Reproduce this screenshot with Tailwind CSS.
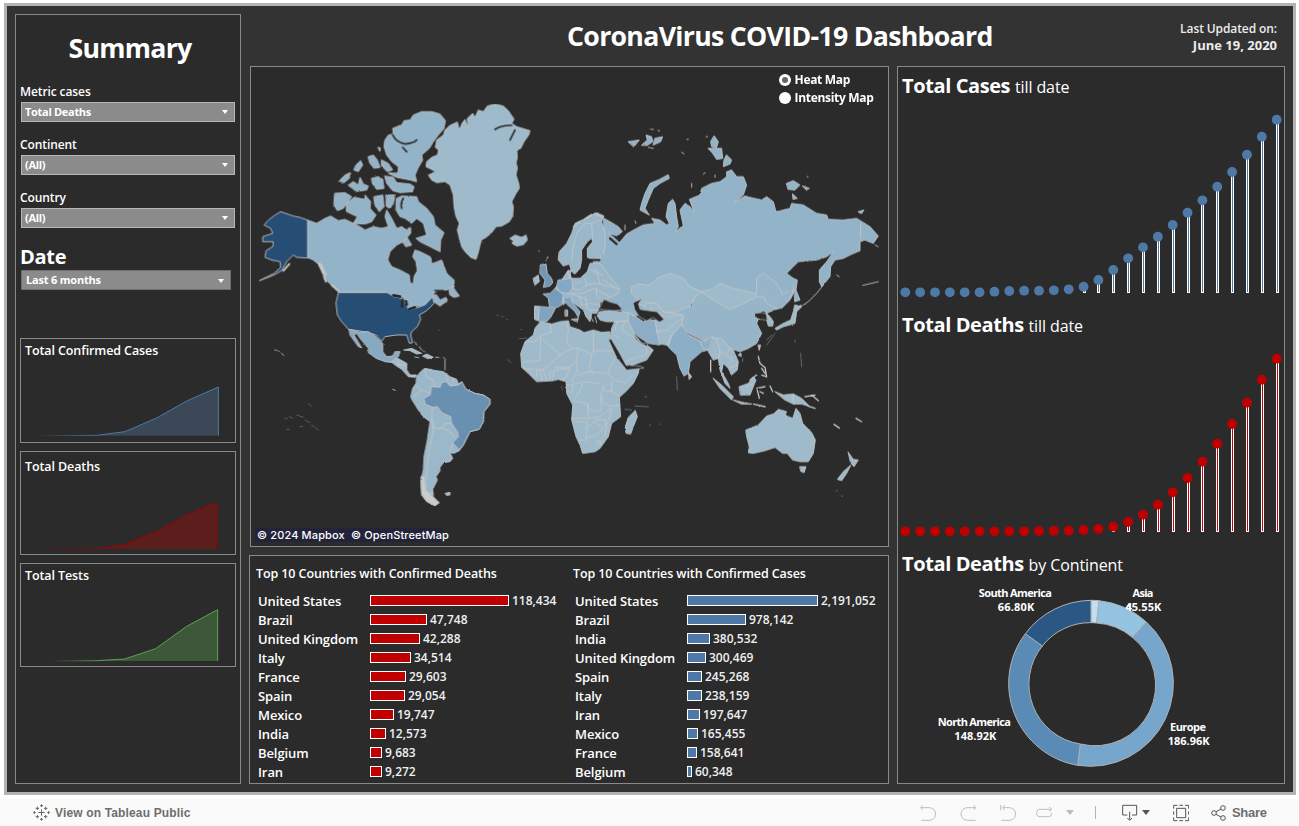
<!DOCTYPE html>
<html lang="en">
<head>
<meta charset="utf-8">
<title>CoronaVirus COVID-19 Dashboard</title>
<script src="https://cdn.jsdelivr.net/npm/@tailwindcss/browser@4"></script>
</head>
<body class="h-[826px] w-[1299px] overflow-hidden bg-white font-['Open_Sans','Noto_Sans',sans-serif] font-semibold text-white">
<div class="flex h-[826px] flex-col">
  <main class="mt-[3px] ml-1 flex h-[792px] w-[1292px] shrink-0 border-[3px] border-[#b3b3b3] bg-[#333333] pt-2 pl-2">

    <aside class="flex h-[770px] w-[226px] flex-col border border-[#8a8a8a] bg-[#2b2b2b] pl-1">
      <h1 class="flex h-[67px] w-[216px] items-center justify-center pl-1 text-[26.7px] font-bold tracking-[-0.7px]">Summary</h1>
      <label class="h-5 text-[12px] leading-5 tracking-[-0.1px]">Metric cases</label>
      <div class="ml-px flex h-5 w-[214px] items-center justify-between border border-[#b8b8b8] bg-[#8b8b8b] pr-1.5 pl-[3px] text-[11px] font-bold tracking-[-0.3px]"><span>Total Deaths</span><svg class="h-1 w-1.5" viewBox="0 0 6 4"><path d="M0 0h6L3 4z" fill="#fff"/></svg></div>
      <label class="mt-[13px] h-5 text-[12px] leading-5 tracking-[-0.1px]">Continent</label>
      <div class="ml-px flex h-5 w-[214px] items-center justify-between border border-[#b8b8b8] bg-[#8b8b8b] pr-1.5 pl-[3px] text-[11px] font-bold tracking-[-0.3px]"><span>(All)</span><svg class="h-1 w-1.5" viewBox="0 0 6 4"><path d="M0 0h6L3 4z" fill="#fff"/></svg></div>
      <label class="mt-[13px] h-5 text-[12px] leading-5 tracking-[-0.1px]">Country</label>
      <div class="ml-px flex h-5 w-[214px] items-center justify-between border border-[#b8b8b8] bg-[#8b8b8b] pr-1.5 pl-[3px] text-[11px] font-bold tracking-[-0.3px]"><span>(All)</span><svg class="h-1 w-1.5" viewBox="0 0 6 4"><path d="M0 0h6L3 4z" fill="#fff"/></svg></div>
      <h2 class="mt-4 h-[26px] text-[20px] leading-[26px] font-bold tracking-[-0.3px]">Date</h2>
      <div class="ml-px flex h-5 w-[210px] items-center justify-between border border-[#6e6e6e] bg-[#8b8b8b] pt-px pr-1.5 pl-1 text-[11px] font-bold tracking-[-0.2px]"><span>Last 6 months</span><svg class="h-1 w-1.5" viewBox="0 0 6 4"><path d="M0 0h6L3 4z" fill="#fff"/></svg></div>

      <section class="mt-12 flex h-[105px] w-[216px] flex-col border border-[#8a8a8a]">
        <h3 class="h-[24px] pl-1 text-[12.5px] leading-[23px] tracking-[-0.1px]">Total Confirmed Cases</h3>
        <svg class="h-[79px] w-[214px]" viewBox="63 189 642 237">
          <defs><linearGradient id="gb" gradientUnits="userSpaceOnUse" x1="110" x2="340" y1="0" y2="0"><stop offset="0" stop-color="#4e79a7" stop-opacity="0"/><stop offset="1" stop-color="#4e79a7"/></linearGradient></defs>
          <path d="M100 407L290 406L375 395L470 354L560 303L656 260V407z" fill="#3a4857"/>
          <path d="M100 407L290 406L375 395L470 354L560 303L655 261V407" fill="none" stroke="url(#gb)" stroke-width="3"/>
        </svg>
      </section>
      <section class="mt-2 flex h-[104px] w-[216px] flex-col border border-[#8a8a8a]">
        <h3 class="h-[27px] pl-1 text-[12.5px] leading-[29px] tracking-[-0.1px]">Total Deaths</h3>
        <svg class="h-[75px] w-[214px]" viewBox="63 537 642 225">
          <defs><linearGradient id="gr" gradientUnits="userSpaceOnUse" x1="110" x2="340" y1="0" y2="0"><stop offset="0" stop-color="#9c0000" stop-opacity="0"/><stop offset="1" stop-color="#9c0000"/></linearGradient></defs>
          <path d="M110 747L290 745L372 735L468 695L560 646L651 606V747z" fill="#5c1d1d"/>
          <path d="M110 747L290 745L372 735L468 695L560 646L650 607V747" fill="none" stroke="url(#gr)" stroke-width="3"/>
        </svg>
      </section>
      <section class="mt-2 flex h-[104px] w-[216px] flex-col border border-[#8a8a8a]">
        <h3 class="h-[24px] pl-1 text-[12.5px] leading-[24px] tracking-[-0.1px]">Total Tests</h3>
        <svg class="h-[78px] w-[214px]" viewBox="63 864 642 234">
          <defs><linearGradient id="gg" gradientUnits="userSpaceOnUse" x1="150" x2="310" y1="0" y2="0"><stop offset="0" stop-color="#59a14f" stop-opacity="0"/><stop offset="1" stop-color="#59a14f"/></linearGradient></defs>
          <path d="M150 1083L290 1082L374 1077L467 1046L560 979L654 928V1083z" fill="#3d5739"/>
          <path d="M150 1083L290 1082L374 1077L467 1046L560 979L653 929V1083" fill="none" stroke="url(#gg)" stroke-width="3"/>
        </svg>
      </section>
    </aside>

    <div class="ml-2 flex flex-col">
      <header class="flex h-[52px] w-[1036px] justify-between">
        <h1 class="ml-[318px] h-[44px] text-[26.7px] leading-[44px] font-bold tracking-[-0.7px] whitespace-nowrap">CoronaVirus COVID-19 Dashboard</h1>
        <div class="mt-[7px] mr-2 text-right text-[12px] leading-[16px] text-[#ececec]">
          <p class="tracking-[-0.1px]">Last Updated on:</p>
          <p class="text-[13px] font-bold">June 19, 2020</p>
        </div>
      </header>
      <div class="flex">
        <div class="flex w-[640px] flex-col">
          <section class="relative ml-px h-[481px] w-[639px] border border-[#8a8a8a] bg-[#2b2b2b]">
            <svg class="block h-[479px] w-[637px]" viewBox="3 21 1911 1437" stroke="#c4c6c7" stroke-width="2.6" stroke-linejoin="round" stroke-linecap="round" fill="#9fbbcb">
              <defs><filter id="coast" x="0" y="0" width="100%" height="100%"><feTurbulence type="fractalNoise" baseFrequency="0.16" numOctaves="2" seed="4"/><feDisplacementMap in="SourceGraphic" scale="5" xChannelSelector="R" yChannelSelector="G"/></filter></defs>
              <g filter="url(#coast)">
              <!-- Greenland, Canada, Alaska -->
              <g>
                <path d="M585 210L600 196L622 186L628 210L636 190L645 178L655 205L652 175L668 160L675 172L685 150L700 155L712 138L735 132L760 138L775 152L792 178L785 190L800 200L820 206L840 212L836 225L822 245L812 265L800 270L802 292L798 310L802 322L798 345L806 370L808 385L798 400L785 425L790 440L788 468L778 485L755 498L738 500L725 518L708 532L694 540L690 555L684 580L678 598L662 592L645 575L635 560L628 535L622 510L628 490L618 470L612 440L610 405L600 375L585 365L560 368L545 360L535 345L558 335L528 320L530 305L545 292L562 285L566 270L556 262L560 240L580 225Z"/>
                <path d="M780 535L795 525L815 532L828 525L832 540L820 554L800 558L786 550L790 543Z"/>
                <g fill="#93b3c8">
                  <path d="M405 240L415 225L430 222L428 205L455 195L462 182L480 180L490 165L515 155L545 155L570 162L586 182L582 205L565 225L550 245L538 265L515 285L518 300L505 322L495 345L500 365L470 358L440 352L415 340L445 335L445 320L425 305L410 285L402 260Z"/>
                  <path d="M405 348L430 352L440 368L480 372L492 380L488 395L450 398L428 392L410 370Z"/>
                  <path d="M295 375L310 365L325 375L330 352L340 372L355 378L350 390L320 394ZM268 362L285 345L300 338L298 355L282 368ZM318 315L332 302L338 315L325 335L312 330ZM355 290L370 285L382 300L390 322L372 325L360 310ZM395 300L415 310L428 330L412 335L395 318ZM365 355L385 350L398 358L402 385L380 388L368 372ZM384 262L391 264L390 273Z"/>
                  <path d="M255 400L285 398L305 410L290 430L280 445L262 452L252 435ZM290 430L312 412L345 418L345 405L362 425L360 445L378 465L365 485L345 492L310 490L322 470L290 455ZM372 410L398 405L402 440L388 455L375 435ZM408 405L435 405L430 430L420 445L410 440Z"/>
                  <path d="M440 415L455 408L500 410L505 425L530 445L550 470L555 495L582 518L572 540L570 575L540 560L510 545L498 535L530 525L520 490L500 475L485 490L465 475L450 470L438 450ZM455 540L470 530L485 555L468 560Z"/>
                  <path d="M172 480L200 490L225 475L242 468L265 482L285 478L310 490L330 500L345 510L370 500L395 505L415 500L405 470L410 450L425 475L440 505L455 500L470 510L482 498L482 520L460 545L440 555L420 575L413 600L425 620L450 630L478 645L480 668L490 672L492 650L502 632L498 605L488 590L495 570L510 575L540 590L550 610L575 600L590 640L612 660L612 680L590 690L565 690L545 705L560 705L570 720L588 712L592 722L570 738L555 728L548 722L520 735L500 740L480 752L470 735L460 712L440 712L412 697L265 697L262 685L240 672L222 650L205 612L190 600L172 592Z"/>
                  <path d="M598 690L608 678L615 690L628 708L612 712L600 705Z"/>
                </g>
                <g fill="none" stroke="#2b2b2b" stroke-width="5"><path d="M428 225Q440 248 465 252Q490 250 500 240M735 208Q755 195 785 196M458 262L470 275M440 360L482 364M425 335H440M490 490L505 525M480 500L515 495M460 415Q450 430 455 445M548 590V606M555 692L580 692M780 240L795 210"/></g>
                <path fill="#284d73" d="M172 480L150 472L130 468L92 455L75 465L55 480L42 495L62 505L68 520L38 530L38 545L70 545L68 560L48 572L45 592L65 600L90 605L92 622L72 640L28 662L70 646L95 632L110 605L130 585L140 592L172 594Z"/>
                <path fill="none" stroke-width="6" d="M205 610L222 640M212 612L228 645M100 632L118 612M245 675L266 694M222 650L228 665"/>
              </g>
              <!-- Americas -->
              <g transform="translate(0 660)">
                <path fill="#284d73" d="M266 38H412L430 50L455 55L470 78L480 90L505 82L525 75L548 50L552 70L530 92L508 105L512 118L502 140L485 155L482 165L488 188L478 190L470 165L440 165L405 170L395 184L378 165L355 158L325 152L295 148L275 125L262 105L258 70Z"/>
                <path fill="none" stroke="#2b2b2b" stroke-width="8" d="M430 46L450 50M458 62L456 80M468 64L470 74M478 88L495 82"/>
                <path fill="#87a9c1" d="M298 148L325 156L355 155L375 168L392 185L398 190L398 215L410 230L428 228L435 215L450 215L445 230L440 232L430 248L405 245L378 235L355 218L355 205L330 175L320 160L312 165L335 203L325 200L300 165Z"/>
                <path d="M425 245L440 233L470 250L470 270L480 285L500 285L495 292L475 290L455 268L435 255ZM462 210L485 205L515 220L500 222L480 212ZM518 228L530 222L550 232L535 236ZM495 231L506 233M557 232H566M495 185L500 195M508 200L515 210M520 212L524 216"/>
                <path fill="none" d="M445 240V255L470 255M585 240V270M580 232L586 238M520 268H545"/>
                <path fill="#9ab8ca" d="M500 290L512 275L525 265L545 270L580 275L600 290L620 298L625 312L635 305L648 328L675 340L700 345L720 358L720 372L702 395L700 425L688 448L660 455L650 475L640 495L628 512L612 520L600 518L608 535L600 545L580 548L570 562L570 572L558 590L562 600L548 628L550 650L568 668L555 678L530 665L515 645L512 605L520 570L522 530L532 480L540 425L520 410L505 390L485 358L482 350L488 325L498 310Z"/>
                <path fill="#6b90b1" d="M545 320L570 322L575 308L588 305L600 318L625 315L636 306L648 328L675 340L700 345L720 358L720 372L702 395L700 425L688 448L660 455L650 475L640 495L628 510L608 488L625 470L622 455L605 430L602 410L575 398L562 380L548 382L525 372L522 355L540 345Z"/>
                <path fill="none" d="M525 268L528 290L550 300L555 320M590 280L592 300L600 315M610 295L608 316M498 318L515 330L540 340M515 330L500 345L490 350M548 382L545 420L552 445L575 445L582 432L603 430M578 445L600 455L612 470M608 490L600 515M545 420L550 450L540 500L532 560L526 610L530 640H550"/>
                <path fill="#c6cccf" d="M514 590L522 592L526 630L552 655L565 668L555 676L530 664L516 645Z"/>
                <path d="M586 640L600 637L600 645L590 646ZM75 210L80 211M85 213L88 215M94 220L101 226M428 328L436 331"/>
                <path fill="none" stroke="#777" stroke-width="2" d="M175 370L184 380M105 415H112M118 410L128 414M140 405L160 412M165 420L180 428M185 435L205 450M110 448H118M150 440H158M740 105L746 107M756 110H760M770 118H773M566 151H569M812 149H815M808 176L830 174M772 238L783 248M934 318L938 330"/>
              </g>
              <!-- Northern Eurasia -->
              <g transform="translate(930 0)" fill="#93b3c8">
                <path d="M132 475L150 485L175 500L187 515L170 527L145 520L165 535L178 548L185 540L200 522L230 505L250 495L285 490L275 475L300 480L320 495L328 490L318 470L325 430L338 418L345 430L350 470L355 500L345 518L358 505L370 498L360 450L375 430L390 440L402 455L388 418L420 405L425 385L455 370L480 365L500 350L500 335L515 330L530 350L550 350L560 375L550 405L520 428L555 408L570 412L605 420L620 410L640 425L648 455L690 445L695 430L730 435L770 460L800 465L805 478L850 480L890 475L930 500L955 528L940 550L915 540L900 545L900 572L870 585L850 595L825 600L812 620L810 650L785 680L778 665L778 630L800 605L820 575L800 590L770 600L715 605L700 620L680 640L700 655L705 690L690 720L665 745L600 700L430 720L215 770L165 740L130 710L100 650L100 600L130 590Z"/>
                <path d="M700 655L712 660L708 690L720 720L705 725ZM325 345L328 355L300 370L280 385L265 420L255 445L268 465L240 450L245 430L255 400L270 370L295 360ZM463 228L475 245L470 262L455 260L452 245ZM445 265L485 265L488 295L470 298L458 280ZM500 285L515 300L510 312L490 320L492 300ZM680 370L700 362L720 375L705 390L685 388ZM728 378L748 385L740 390ZM698 402L712 415L700 418ZM895 455L912 450L905 460Z"/>
                <path d="M205 245L238 240L222 260ZM245 255L262 240L258 225L275 230L278 245L262 256ZM285 235L308 230L302 245L280 255ZM270 208L280 208M294 212H299M265 262L280 265M381 238H385M365 277L372 281M438 230H443M430 342L436 338M465 345V352M395 370V382M741 350H744M195 495V510M225 483L228 490" />
                <path fill="#9bb8ca" d="M-2 575L20 550L35 520L45 490L70 478L90 465L110 458L132 468L125 485L135 520L135 565L125 592L100 598L82 592L82 565L98 545L95 535L82 545L65 570L65 600L60 625L45 642L35 635L28 612L10 618L-5 600Z"/>
                <path fill="none" stroke-width="4" d="M40 500L60 485M75 478L95 465M105 462L125 470"/>
                <path fill="none" d="M35 600L40 560L50 520L75 490L95 490L98 535M95 490L120 480M902 490V535"/>
                <path fill="none" stroke="#2b2b2b" stroke-width="7" d="M82 600H118M80 605L78 635L60 645M150 535L170 552"/>
                <path fill="none" stroke="#c4c6c7" d="M790 675L770 700L745 725L718 742M908 676L955 665M830 645L838 650M945 555L955 560M722 735L710 745"/>
              </g>
              <g transform="translate(750 660)">
                <!-- Africa -->
                <path d="M122 125L155 132L180 125L205 122L210 140L240 150L252 158L280 150L305 157L330 155L328 175L345 205L360 235L378 268L418 262L415 280L400 310L380 332L358 352L362 410L335 430L325 470L300 505L285 515L248 520L240 495L228 470L215 420L218 375L200 340L198 305L175 298L160 302L110 305L85 280L65 262L62 220L75 185L100 165L105 145Z"/>
                <path d="M406 392L412 410L400 440L392 462L378 460L376 440L385 412Z"/>
                <path fill="none" d="M150 132L155 155L120 168L105 185H78M122 172L120 240L70 245M120 172L180 222L165 240L135 265L120 270M200 125L205 150L200 185L215 205L180 225M280 155V220M280 212H340M215 205L235 205L275 222L268 265L280 285M235 205L230 240L210 262L165 262M158 300L162 270L210 265L200 290L185 300M230 240L232 270L215 300L225 312L248 305L300 310M345 235L330 260L325 280L340 300L375 308L400 285M232 285L270 275L325 280M335 305V335L358 350M310 330L335 335M305 350L310 370L330 380L360 375M250 308L235 340L220 362L262 370L268 390L300 395L305 385L300 350L312 315M262 370L265 415H215M228 425H262L258 480H238M262 440L285 425L310 445L290 465L262 472M285 420L315 418L318 440M335 385L330 410L320 430L315 468M265 415L300 410L335 385M70 262L90 270L100 290M110 270V290M128 268L140 300M150 270V300M200 315H220L215 340M85 265L120 270L125 300"/>
                <circle cx="298" cy="488" r="6"/>
                <!-- Europe -->
                <path fill="#7fa4c2" d="M105 78L150 82L165 88L152 112L140 125L120 125L105 118Z"/>
                <path fill="#9bb8ca" d="M105 82L118 84L115 120L105 118Z"/>
                <path d="M165 25L185 0L205 -30L215 -5L240 -5L262 -25L270 -50L300 -50L330 -10L358 25L355 40L330 52L300 68L298 85L290 100L275 100L270 125L258 110L250 90L215 65L205 55L190 75L182 55Z" fill="#9ab7ca"/>
                <path fill="#759cbd" d="M130 42L150 40L165 25L180 35L190 45L185 75L165 85L148 78L145 55Z"/>
                <path fill="#85a8c4" d="M175 0L215 -5L218 25L205 40L185 38L170 22Z"/>
                <path fill="#7fa4c2" d="M190 58L210 48L220 70L240 95L235 112L225 95L200 72ZM215 118L235 115L232 125ZM196 90H203V108H196Z"/>
                <path fill="#7196b7" d="M122 -46L138 -48L142 -20L155 -5L158 8L150 18L130 22L135 0L120 -20Z"/>
                <path d="M100 -5L115 -15L118 5L105 15ZM203 -25L212 -30L210 -5ZM116 -87H118M144 -70L138 -58"/>
                <path fill="none" d="M218 25L240 30L260 15L255 -5M215 40L250 40L280 25L330 50M205 40L240 50L245 75L270 70L300 75M255 50L265 90L290 90M260 15L290 10L350 25M280 -25L310 -15M270 -30H290L300 10M290 25V50L300 55M240 50L265 60M255 80L275 95M225 10L245 5M310 0L355 28M270 105L280 125M285 110L290 128"/>
                <!-- Asia -->
                <path fill="#97b5c9" d="M550 105L510 95L575 78L585 50L605 35L640 40L770 40L770 -5L790 -20L830 10L850 45L880 20L875 45L840 85L820 90L800 100L790 92L765 105L778 110L770 130L785 160L770 190L745 205L720 215L690 205L660 205L650 175L605 180L565 160L545 135Z"/>
                <path fill="#93b3c8" stroke="none" d="M835 -30L882 -5L880 25L855 70L842 82L830 75L850 45L868 38Z"/>
                <path d="M395 20L420 12L445 15L465 5L470 -5L510 -20L550 -5L570 20L605 35L585 50L570 78L540 90L510 100L490 95L470 70L440 68L440 80L420 75L412 58L395 40ZM605 35L640 25L660 10L700 25L765 40L770 50L730 70L690 88L640 60ZM298 95L330 92L385 98L400 108L385 122L350 125L320 125L300 120L292 108ZM345 125L385 122L405 165L425 190L445 198L460 210L440 240L380 262L375 250L355 215L330 178L335 145Z"/>
                <path d="M440 68L470 70L490 95L520 100L550 105L545 135L520 160L525 215L500 195L470 190L465 150L460 120L490 125L480 100L450 95L430 90Z"/>
                <path fill="#8cadc5" d="M385 98L400 105L430 125L445 118L465 122L470 155L480 195L445 190L430 180L415 170L400 155L388 130Z"/>
                <path fill="#8bafc6" d="M545 135L565 165L605 185L640 170L625 210L605 215L570 245L565 280L552 288L540 265L530 225L512 208L505 200L515 165L530 150Z"/>
                <path d="M566 278L575 290L568 298ZM640 175L665 175L690 205L700 210L715 245L712 270L695 285L685 265L670 250L665 275L685 310L690 325L675 310L660 270L655 235L640 240L625 215Z"/>
                <path d="M800 100L812 112L820 125L818 138L805 138L800 120ZM885 75L905 80L890 95L885 130L850 140L830 150L825 145L850 130L872 120L880 95ZM775 195L782 195L778 210ZM640 295L665 315L700 350L695 360L660 325ZM700 360L740 370L755 372L725 372ZM718 320L745 310L760 290L768 300L750 345L722 345ZM825 335L850 345L880 342L905 355L930 380L905 372L880 372L855 360ZM715 225L722 218L724 228Z"/>
                <path fill="none" d="M350 125L345 150L335 160M375 122L365 150L400 170M340 165L355 170M375 245L410 232L440 225V205M470 155L500 150L545 115M500 195L520 160M600 185L610 205L625 210M565 165L600 182H620M655 235L665 215L680 225L700 240M690 205L680 220M690 262L712 255M650 180L660 210L655 230M450 85L490 110M490 95L530 100M510 110L545 105M740 320L755 312M880 342V372M770 50L790 50L800 70L830 85M400 108L385 98"/>
                <path fill="none" stroke-width="4" d="M775 230L780 250L795 262L800 290L785 285M785 265L795 280M770 325L795 320M772 330L778 355M790 340L780 335M760 372L795 380M810 318L818 335M935 345L955 362M915 350L945 345M925 378L945 385M750 300L770 285M1002 433L1018 444M1068 415L1085 425M632 240V275"/>
                <path d="M738 450L775 435L800 408L820 402L835 388L860 395L855 405L878 415L888 385L900 400L908 430L935 458L946 480L940 520L925 545L900 545L878 540L862 520L848 520L825 502L795 512L760 520L745 518L748 500L740 470ZM900 560L918 560L912 578L903 574ZM1045 517L1060 538L1075 540L1062 560L1052 548ZM1052 556L1040 580L1025 602L1012 598L1030 575Z"/>
                <path fill="none" stroke="#888" stroke-width="2" d="M902 220L905 260M885 180V186M728 235V245M530 290L532 330M435 350H440M375 388L395 390M405 378L445 380M448 435H452M480 432H482M800 180L815 165M1008 632H1012M1024 648H1028M800 195L825 160"/>
                <!-- Inland seas -->
                <g fill="#2b2b2b" stroke="#aeb3b6" stroke-width="2"><path d="M298 86L312 58L330 66L352 72L367 88L345 92L320 90ZM400 68L425 57L415 72L420 88L445 92L470 95L492 118L478 126L460 112L440 122L418 110L405 90ZM403 165L415 182L430 190L445 188L440 198L425 190L408 178ZM765 100L785 98L798 102L802 120L780 118L765 110ZM326 178L334 178L360 222L378 256L420 258L432 264L380 270L350 232Z"/></g>
              </g>
              </g>
            </svg>
            <div class="absolute top-[4px] left-[528px] text-[12px] leading-[18px] font-bold tracking-[-0.3px]">
              <div class="flex items-center gap-[3.5px]"><span class="flex size-3 items-center justify-center rounded-full bg-white"><i class="size-1.5 rounded-full bg-[#666]"></i></span>Heat Map</div>
              <div class="flex items-center gap-[3.5px]"><span class="size-3 rounded-full bg-white"></span>Intensity Map</div>
            </div>
            <div class="absolute bottom-1 left-1 h-[14px] w-[187px] bg-[#23243a] pl-0.5 font-[Inter,sans-serif] text-[11px] leading-[14px] font-medium tracking-[0.14px] whitespace-nowrap">© 2024 Mapbox&nbsp; © OpenStreetMap</div>
          </section>

          <section class="mt-2 flex h-[229px] w-[640px] border border-[#8a8a8a] bg-[#2b2b2b]">
            <div class="w-[317px] pl-1.5">
              <h3 class="h-[35px] text-[12.5px] leading-[35px] tracking-[-0.1px]">Top 10 Countries with Confirmed Deaths</h3>
              <div id="deaths"></div>
            </div>
            <div class="pl-1.5">
              <h3 class="h-[35px] text-[12.5px] leading-[35px] tracking-[-0.1px]">Top 10 Countries with Confirmed Cases</h3>
              <div id="cases"></div>
            </div>
          </section>
        </div>

        <section class="ml-2 flex h-[718px] w-[388px] flex-col border border-[#8a8a8a] bg-[#2b2b2b]">
          <h2 class="h-[38px] pl-1 text-[20px] leading-[38px] font-bold tracking-[-0.4px]">Total Cases <span class="text-[16px] font-normal tracking-[-0.1px]">till date</span></h2>
          <svg id="lolliCases" class="h-[201px] w-[386px]" viewBox="898 105 386 201"></svg>
          <h2 class="h-[38px] pl-1 text-[20px] leading-[38px] font-bold tracking-[-0.4px]">Total Deaths <span class="text-[16px] font-normal tracking-[-0.1px]">till date</span></h2>
          <svg id="lolliDeaths" class="h-[201px] w-[386px]" viewBox="898 344 386 201"></svg>
          <h2 class="h-[38px] pl-1 text-[20px] leading-[38px] font-bold tracking-[-0.4px]">Total Deaths <span class="text-[16px] font-normal tracking-[-0.1px]">by Continent</span></h2>
          <svg class="h-[200px] w-[386px]" viewBox="24 114 1158 600">
            <g fill="#fff" font-size="33" font-weight="700" text-anchor="middle" lengthAdjust="spacingAndGlyphs">
              <text x="376" y="156" textLength="219">South America</text><text x="378" y="198" textLength="110">66.80K</text>
              <text x="759" y="156" textLength="63">Asia</text><text x="760" y="198" textLength="108">45.55K</text>
              <text x="253" y="543" textLength="219">North America</text><text x="256" y="585" textLength="126">148.92K</text>
              <text x="894" y="558" textLength="108">Europe</text><text x="896" y="600" textLength="126">186.96K</text>
            </g>
            <g stroke="#b0b0b0" stroke-width="3" stroke-linejoin="round">
              <path fill="#bfe0f1" d="M603 166A249 249 0 0 1 627 167L620 234A182 182 0 0 0 603 233z"/>
              <path fill="#95c3e2" d="M627 167A249 249 0 0 1 769 231L727 277A182 182 0 0 0 620 234z"/>
              <path fill="#76a6cc" d="M769 231A249 249 0 0 1 563 661L571 597A182 182 0 0 0 727 277z"/>
              <path fill="#5a8ab6" d="M563 661A249 249 0 0 1 406 266L457 303A182 182 0 0 0 571 597z"/>
              <path fill="#2a5783" d="M406 266A249 249 0 0 1 603 166V233A182 182 0 0 0 457 303z"/>
            </g>
            <text x="707" y="198" fill="#fff" font-size="33" font-weight="700" clip-path="url(#cl)" textLength="108">45.55K</text>
            <clipPath id="cl"><rect x="700" y="170" width="30" height="40"/></clipPath>
          </svg>
        </section>
      </div>
    </div>
  </main>

  <footer class="mt-1 flex h-[27px] w-full shrink-0 items-center bg-[#fafafa] font-['Liberation_Sans',Arial,sans-serif] text-[#6e6e6e]">
    <svg class="ml-[33px] h-[17px] w-[17px]" viewBox="0 0 51 51" fill="none" stroke="#666" stroke-width="3"><path d="M25.500 16V35M16 25.500H35M13 8V18M8 13H18M38 8V18M33 13H43M13 33V43M8 38H18M38 33V43M33 38H43M25.500 1V9M21 5H30M25.500 42V50M21 46H30M4 21V30M1 25.500H8M47 21V30M43 25.500H50"/></svg>
    <span class="ml-[5px] w-[136px] text-[12px] font-bold tracking-[0.15px] whitespace-nowrap">View on Tableau Public</span>
    <svg class="ml-[729px] h-[18px] w-[17px]" viewBox="89 777 51 54" fill="none" stroke="#bdbdbd" stroke-width="3"><path d="M97 781L91 788L97 795M92 788H117A19 19 0 0 1 117 826H93"/></svg>
    <svg class="ml-[23px] h-[18px] w-[17px]" viewBox="209 777 51 54" fill="none" stroke="#bdbdbd" stroke-width="3"><path d="M250 781L256 788L250 795M255 788H231A19 19 0 0 0 231 826H256"/></svg>
    <svg class="ml-[23px] h-[18px] w-[17px]" viewBox="329 777 51 54" fill="none" stroke="#bdbdbd" stroke-width="3"><path d="M331 780V796M343 781L337 788L343 795M338 788H357A19 19 0 0 1 357 826H333"/></svg>
    <svg class="ml-[18px] h-[18px] w-[19px]" viewBox="434 777 57 54" fill="none" stroke="#bdbdbd" stroke-width="3"><path d="M476 786L484 793L476 800M482 793H449A9 9 0 0 0 439 802V806A9 9 0 0 0 449 815H475A9 9 0 0 0 484 806V803"/></svg>
    <svg class="ml-[12px] h-[5px] w-2" viewBox="0 0 8 5"><path d="M0 0h8L4 5z" fill="#bdbdbd"/></svg>
    <span class="ml-[21px] h-[13px] w-px bg-[#b5b5b5]"></span>
    <svg class="ml-[26px] h-[18px] w-[16px]" viewBox="695 777 48 54" fill="none" stroke="#555" stroke-width="3"><path d="M711 810H697V781H739V810H725M718 800V824M711 819L718 826L725 819"/></svg>
    <svg class="ml-1 h-[5px] w-2" viewBox="0 0 8 5"><path d="M0 0h8L4 5z" fill="#555"/></svg>
    <svg class="ml-[23px] h-[18px] w-[16px]" viewBox="848 777 48 54" fill="none" stroke="#555" stroke-width="3"><path d="M850 791V781H861M884 781H895V791M895 817V827H884M861 827H850V817M859 790H886V818H859zM867 781H878M867 827H878M850 799V809M895 799V809"/></svg>
    <svg class="ml-[22px] h-[18px] w-[16px]" viewBox="963 777 48 54" fill="none" stroke="#555" stroke-width="3"><circle cx="972" cy="804" r="7"/><circle cx="999" cy="789" r="7"/><circle cx="999" cy="819" r="7"/><path d="M978 800L993 792M978 808L993 816"/></svg>
    <span class="ml-[5px] text-[13px] font-bold tracking-[-0.3px]">Share</span>
  </footer>
</div>
<script>
const rows = (id, fill, data) => {
  document.getElementById(id).innerHTML = data.map(([name, value, w]) =>
    `<div class="flex h-[19px] items-center"><span class="w-[114px] pt-px pl-0.5 text-[13px] leading-[19px] whitespace-nowrap tracking-[-0.1px]">${name}</span><span class="h-[11px] border border-white ${fill}" style="width:${w}px"></span><span class="ml-[3px] text-[12px] leading-[17px] text-[#f0f0f0]">${value}</span></div>`).join('');
};
rows('deaths', 'bg-[#c00000]', [['United States','118,434',139],['Brazil','47,748',57],['United Kingdom','42,288',50],['Italy','34,514',41],['France','29,603',36],['Spain','29,054',35],['Mexico','19,747',24],['India','12,573',16],['Belgium','9,683',12],['Iran','9,272',12]]);
rows('cases', 'bg-[#4e79a7]', [['United States','2,191,052',131],['Brazil','978,142',59],['India','380,532',23],['United Kingdom','300,469',19],['Spain','245,268',15],['Italy','238,159',15],['Iran','197,647',13],['Mexico','165,455',11],['France','158,641',10],['Belgium','60,348',5]]);

const barX = [1083,1097,1112,1127,1142,1157,1172,1187,1201,1216,1231,1246,1261,1276];
const lollipops = (id, color, base, ys) => {
  document.getElementById(id).innerHTML = ys.map((y, i) => {
    const cx = 905.3 + i * 14.855, x = barX[i - 12];
    const bar = x && base - y > 4 ? `<rect x="${x}" y="${y}" width="3" height="${base - y}" fill="#fff"/><rect x="${x + 1}" y="${y}" width="1" height="${base - y - 1}" fill="${color}"/>` : '';
    return bar + `<circle cx="${cx}" cy="${y}" r="4.9" fill="${color}"/>`;
  }).join('');
};
lollipops('lolliCases', '#4e79a7', 293, [877,877,877,877,877,877,875,873,872,872,871,868,860,840,810,775,742,710,675,638,601,560,516,464,410,359].map(v => v / 3));
lollipops('lolliDeaths', '#c00000', 532, [694,694,694,694,694,694,694,694,694,693,692.5,692,690,687,680,666,644,614,577,534,485,431,372,308,239,176].map(v => 300 + v / 3));
</script>
</body>
</html>
